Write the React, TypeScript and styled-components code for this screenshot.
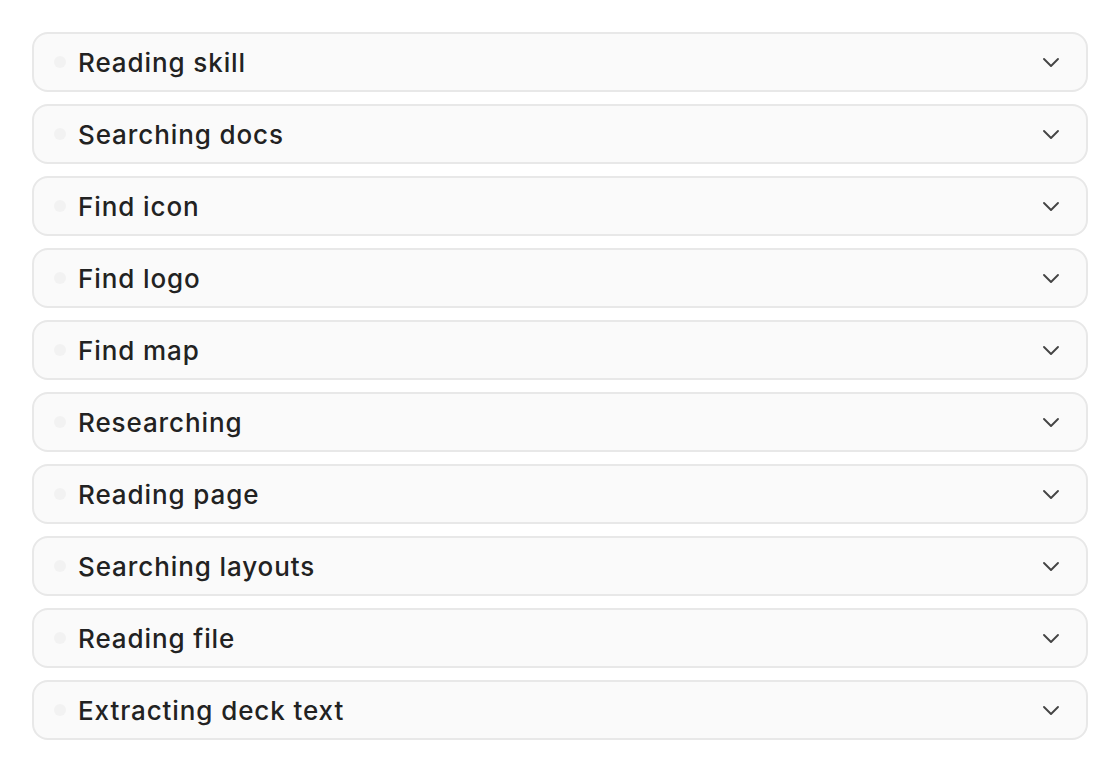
import styled, { createGlobalStyle } from "styled-components";

const GlobalStyle = createGlobalStyle`
  body {
    margin: 0;
    background: #ffffff;
    font-family: Inter, "Noto Sans", sans-serif;
  }
`;

const Container = styled.div`
  padding: 32px;
  display: flex;
  flex-direction: column;
  gap: 12px;
`;

const Step = styled.div`
  height: 56px;
  display: flex;
  align-items: center;
  padding: 0 23px 0 20px;
  border: 2px solid #e8e8e8;
  border-radius: 16px;
  background: #fafafa;
`;

const Dot = styled.span`
  width: 12px;
  height: 12px;
  border-radius: 50%;
  background: #f2f2f2;
  margin-right: 12px;
  flex-shrink: 0;
`;

const Label = styled.span`
  flex: 1;
  font-size: 26px;
  font-weight: 500;
  color: #222222;
  letter-spacing: 0.9px;
`;

const Chevron = () => (
  <svg width="24" height="24" viewBox="0 0 24 24" fill="none" stroke="#444" strokeWidth="1.9" strokeLinecap="round" strokeLinejoin="round">
    <path d="M5 9l7 7 7-7" />
  </svg>
);

const steps = [
  "Reading skill",
  "Searching docs",
  "Find icon",
  "Find logo",
  "Find map",
  "Researching",
  "Reading page",
  "Searching layouts",
  "Reading file",
  "Extracting deck text",
];

function App() {
  return (
    <>
      <GlobalStyle />
      <Container>
        {steps.map((s) => (
          <Step key={s}>
            <Dot />
            <Label>{s}</Label>
            <Chevron />
          </Step>
        ))}
      </Container>
    </>
  );
}

export default App;
